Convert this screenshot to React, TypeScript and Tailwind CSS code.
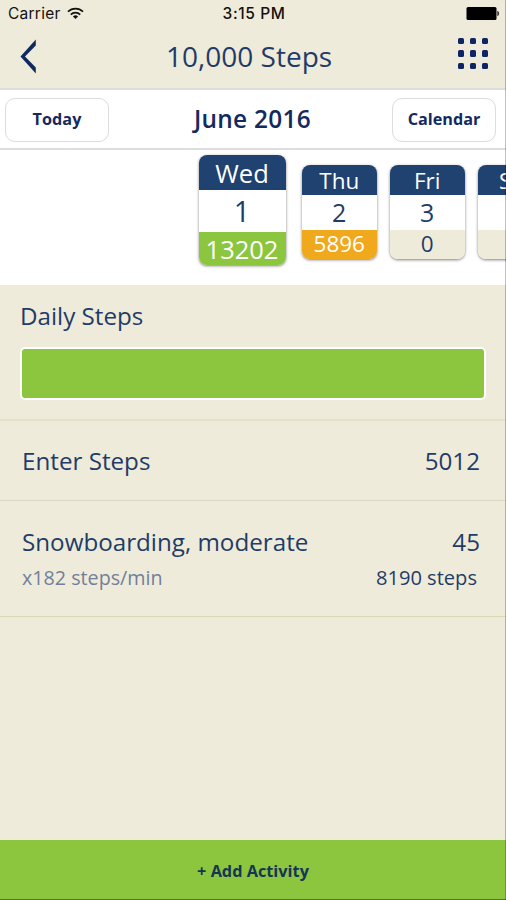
import clsx from 'clsx';

type Day = {
    name: string;
    date: number;
    steps: number;
    status: 'reached' | 'partial' | 'none';
    selected?: boolean;
};

const days: Day[] = [
    { name: 'Wed', date: 1, steps: 13202, status: 'reached', selected: true },
    { name: 'Thu', date: 2, steps: 5896, status: 'partial' },
    { name: 'Fri', date: 3, steps: 0, status: 'none' },
];

function StatusBar() {
    return (
        <div className="grid h-[26px] grid-cols-3 items-center pl-2 pr-[6px] pt-px font-['Inter',sans-serif] text-[15.5px] text-[#111]">
            <div className="flex items-center gap-[6px]">
                <span className="tracking-[0.25px]">Carrier</span>
                <svg width="17" height="13" viewBox="0 0 18 13" fill="none" stroke="#111" strokeWidth="1.8">
                    <path d="M1 4.6a11.4 11.4 0 0 1 16 0" />
                    <path d="M4 7.7a7 7 0 0 1 10 0" />
                    <path d="M9 12.4 6.3 9.7a3.8 3.8 0 0 1 5.4 0z" fill="#111" stroke="none" />
                </svg>
            </div>
            <span className="whitespace-nowrap text-center font-medium tracking-[0.6px]">3:15 PM</span>
            <svg className="justify-self-end" width="34" height="13" viewBox="0 0 34 13">
                <rect x="0.5" y="0" width="30" height="13" rx="1.5" fill="#000" />
                <path d="M31.3 3.8c2.4.6 2.4 4.8 0 5.4z" fill="#333" />
            </svg>
        </div>
    );
}

function Header() {
    return (
        <div className="flex h-[62px] items-start justify-between pl-5 pr-[18px]">
            <svg className="mt-[13px]" width="18" height="35" viewBox="0 0 18 35" fill="none">
                <path d="M15.8 0.5v6L5 17.5 15.8 28.5v6L0.5 17.5z" fill="#0f2a5f" />
            </svg>
            <h1 className="ml-0.5 mt-[11px] text-[28px] leading-[38px]">10,000 Steps</h1>
            <div className="mt-[12px] grid grid-cols-3 gap-x-[5.5px] gap-y-[6px]">
                {Array.from({ length: 9 }, (_, i) => (
                    <span key={i} className="size-[6.3px] rounded-[1.5px] bg-[#0f2463]" />
                ))}
            </div>
        </div>
    );
}

function DayCard({ day }: { day: Day }) {
    return (
        <div
            className={clsx(
                'flex shrink-0 flex-col overflow-hidden rounded-[8px] bg-white text-center shadow-[0_1px_3px_rgba(0,0,0,0.5)]',
                day.selected ? 'mr-[16.5px] h-[110px] w-[87px] text-[25.5px]' : 'mr-[13.5px] mt-[9.5px] h-[94px] w-[74.5px] text-[22.5px]'
            )}
        >
            <div className={clsx('flex items-center justify-center bg-[#1f4270] pt-0.5 text-white', day.selected ? 'h-[35px]' : 'h-[30px]')}>
                {day.name}
            </div>
            <div className={clsx('flex flex-1 items-center justify-center leading-none', day.selected ? 'text-[28.5px]' : 'text-[25px]')}>
                {day.date}
            </div>
            <div
                className={clsx(
                    'flex items-center justify-center leading-none',
                    day.selected ? 'h-[33px] pt-0.5' : 'h-[29px] pt-px',
                    day.status === 'reached' && 'bg-[#8cc63f] text-white',
                    day.status === 'partial' && 'bg-[#f0a81c] text-white',
                    day.status === 'none' && 'bg-[#eeebda]'
                )}
            >
                {day.steps}
            </div>
        </div>
    );
}

export default function App() {
    return (
        <div className="relative flex h-[900px] w-[506px] flex-col overflow-hidden bg-[#efebda] font-['Open_Sans',sans-serif] text-[#1f3c69]">
            <StatusBar />
            <Header />

            {/* Month navigation */}
            <div className="flex h-[62px] items-center justify-between border-y-2 border-[#dddddd] bg-white pl-[5px] pr-[10px] pt-px font-bold text-[#14295f]">
                <button className="h-[44px] w-[104px] rounded-[10px] border-[1.5px] border-[#dcdcdc] text-[16.2px] tracking-[0.1px]">Today</button>
                <h2 className="ml-[4px] text-[24.4px] font-semibold tracking-[0.3px]">June 2016</h2>
                <button className="h-[44px] w-[104px] rounded-[10px] border-[1.5px] border-[#dcdcdc] text-[16.2px]">Calendar</button>
            </div>

            {/* Day strip */}
            <div className="flex h-[135px] items-start overflow-hidden bg-white pl-[198.5px] pt-[5px]">
                {days.map((day) => (
                    <DayCard key={day.name} day={day} />
                ))}
                {/* Saturday runs off the right side */}
                <div className="mt-[9.5px] flex h-[94px] w-[74.5px] shrink-0 flex-col overflow-hidden rounded-[8px] bg-white shadow-[0_1px_3px_rgba(0,0,0,0.5)]">
                    <div className="h-[30px] bg-[#1f4270] pl-[21px] pt-0.5 text-[22.5px] leading-[28px] text-white">Sat</div>
                    <div className="flex-1" />
                    <div className="h-[29px] bg-[#eeebda]" />
                </div>
            </div>

            {/* Daily progress */}
            <section className="h-[136px] border-b-2 border-[#e5e1c8] px-5 pt-[14px]">
                <h3 className="text-[24.2px] leading-[34px]">Daily Steps</h3>
                <div className="mt-[14px] h-[53px] rounded-[5px] border-[2.5px] border-white bg-[#8cc63f]" />
            </section>

            <div className="flex h-[80px] items-center justify-between border-b border-[#dbd7c2] pl-[22px] pr-[26px] pt-px text-[24.2px]">
                <span>Enter Steps</span>
                <span>5012</span>
            </div>

            <div className="h-[116px] border-b border-[#dcd8b6] pl-[22px] pr-[26px] pt-[24px]">
                <div className="flex justify-between text-[24.2px] leading-[34px]">
                    <span>Snowboarding, moderate</span>
                    <span>45</span>
                </div>
                <div className="mt-[5px] flex justify-between pr-[3px] text-[20.1px] leading-[28px]">
                    <span className="text-[19.7px] text-[#71809a]">x182 steps/min</span>
                    <span>8190 steps</span>
                </div>
            </div>

            <button className="mt-auto h-[60px] border-b border-b-[#4f7a20] bg-[#8cc63f] pt-[3px] text-[16.3px] font-bold text-[#163556]">
                + Add Activity
            </button>

            {/* Screen edge */}
            <div className="absolute inset-y-0 right-0 w-px bg-black/25" />
        </div>
    );
}
